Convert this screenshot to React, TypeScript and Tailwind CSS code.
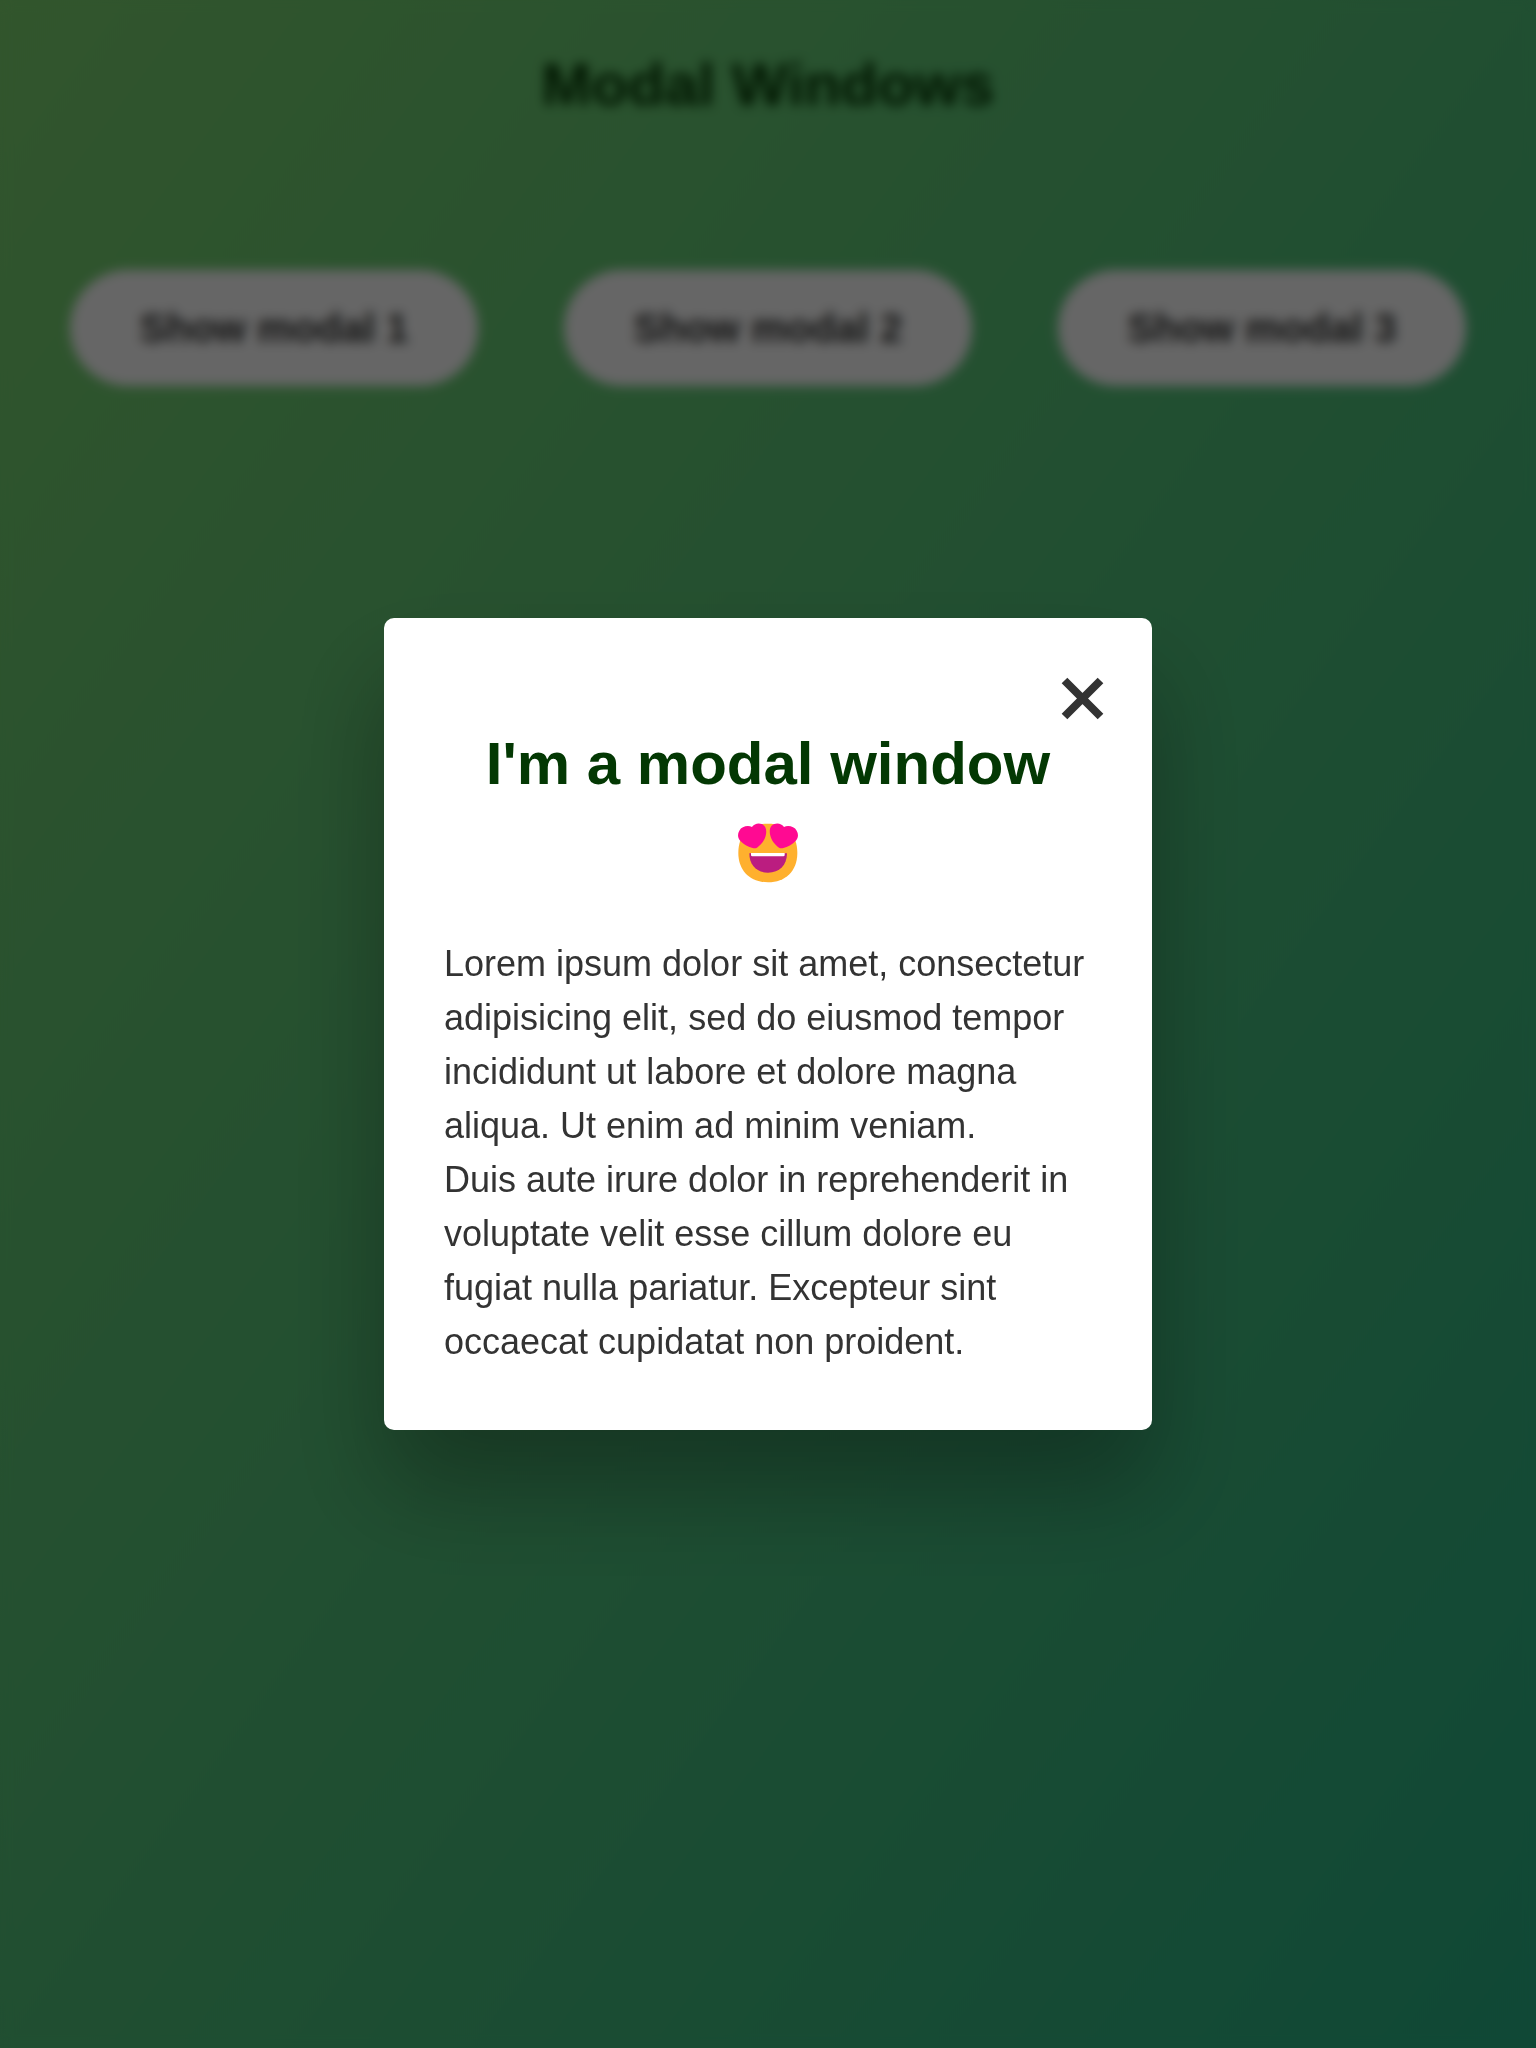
const buttons = ["Show modal 1", "Show modal 2", "Show modal 3"];

function HeartEyes() {
  return (
    <svg className="h-[60px] w-[60px]" viewBox="54 38 180 180" role="img" aria-label="Smiling face with heart eyes">
      <path
        d="M144 40C200 40 232 72 232 128C232 182 196 216 144 216C91 216 55 182 55 128C55 72 88 40 144 40Z"
        fill="#ffb02e"
      />
      <path d="M88 129H201C201 165 178 187 144 187C110 187 88 165 88 129Z" fill="#bb1d80" />
      <path d="M93 128H194V134Q194 138 190 138H97Q93 138 93 134Z" fill="#fff" />
      <path
        d="M96 50C102 41 114 37 125 41C138 46 140 58 138 72C135 89 124 103 111 112C107 114 103 115 98 113C85 110 71 103 62 93C54 84 51 73 58 61C65 48 84 44 96 50Z"
        fill="#ff0a92"
      />
      <path
        d="M192 50C186 41 174 37 163 41C150 46 148 58 150 72C153 89 164 103 177 112C181 114 185 115 190 113C203 110 217 103 226 93C234 84 237 73 230 61C223 48 204 44 192 50Z"
        fill="#ff0a92"
      />
    </svg>
  );
}

export default function App() {
  return (
    <div className="relative h-[2048px] w-full overflow-hidden bg-[linear-gradient(to_top_left,#28b487,#7dd56f)] font-['Liberation_Sans',Arial,sans-serif] text-[#333]">
      <main className="flex flex-col items-center">
        <h1 className="mt-[40px] text-[60px] leading-[90px] font-bold text-[#033803]">Modal Windows</h1>
        <div className="mt-[140px] flex gap-[86px]">
          {buttons.map((label) => (
            <button key={label} className="h-[116px] w-[408px] rounded-full bg-white text-[40px] font-bold">
              {label}
            </button>
          ))}
        </div>
      </main>

      <div className="absolute inset-0 flex items-center justify-center bg-black/60 backdrop-blur-[6px]">
        <section
          role="dialog"
          className="relative h-[812px] w-[768px] rounded-[10px] bg-white px-[60px] pt-[101px] shadow-[0_60px_100px_rgba(0,0,0,0.3)]"
        >
          <button aria-label="Close" className="absolute top-[59px] right-[48px]">
            <svg className="h-[43px] w-[43px]" viewBox="0 0 43 43" stroke="#333" strokeWidth="8" fill="none">
              <path d="M3.5 3.5L39.5 39.5M39.5 3.5L3.5 39.5" />
            </svg>
          </button>
          <h2 className="flex flex-col items-center text-[60px] leading-[90px] font-bold text-[#033803]">
            <span className="whitespace-nowrap">I'm a modal window</span>
            <span className="flex h-[90px] items-center pb-[2px]">
              <HeartEyes />
            </span>
          </h2>
          <p className="mt-[38px] text-[36px] leading-[54px] whitespace-nowrap">
            Lorem ipsum dolor sit amet, consectetur
            <br />
            adipisicing elit, sed do eiusmod tempor
            <br />
            incididunt ut labore et dolore magna
            <br />
            aliqua. Ut enim ad minim veniam.
            <br />
            Duis aute irure dolor in reprehenderit in
            <br />
            voluptate velit esse cillum dolore eu
            <br />
            fugiat nulla pariatur. Excepteur sint
            <br />
            occaecat cupidatat non proident.
          </p>
        </section>
      </div>
    </div>
  );
}
